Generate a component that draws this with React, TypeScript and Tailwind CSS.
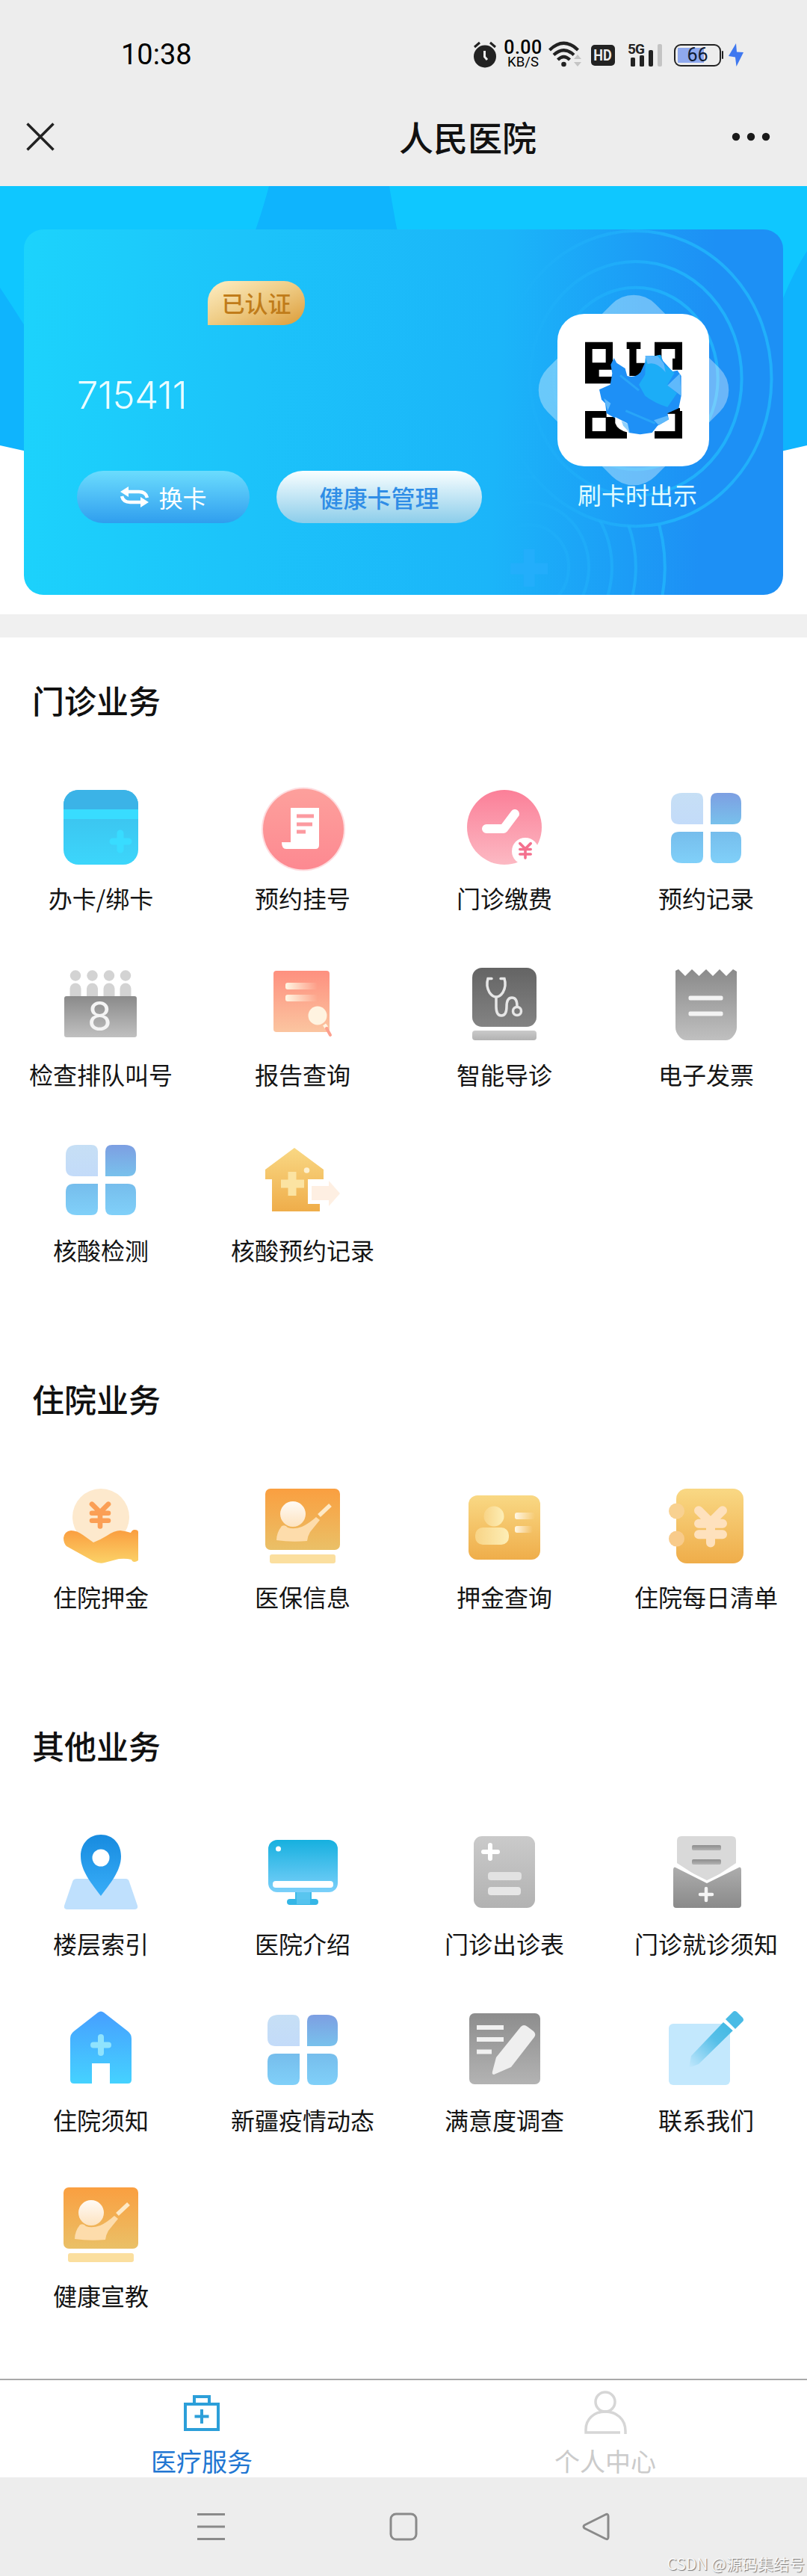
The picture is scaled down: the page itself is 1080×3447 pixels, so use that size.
import { FC, ReactNode } from "react";

type Item = { label: string; icon: ReactNode };

const Gradient: FC<{ id: string; from: string; to: string; flat?: boolean; fade?: boolean }> = ({
  id,
  from,
  to,
  flat,
  fade,
}) => (
  <linearGradient id={id} x1="0" y1="0" x2={flat ? "1" : "0"} y2={flat ? "0" : "1"}>
    <stop offset="0" stopColor={from} />
    <stop offset="1" stopColor={to} stopOpacity={fade ? 0 : 1} />
  </linearGradient>
);

// gradients shared by all the service icons
const IconDefs: FC = () => (
  <svg className="absolute h-0 w-0">
    <defs>
      <Gradient id="card" from="#3cbcea" to="#3cd6fb" />
      <Gradient id="coral" from="#fda09c" to="#fd8991" />
      <Gradient id="rose" from="#fb7f98" to="#fcb9c3" />
      <Gradient id="tile" from="#76bdec" to="#80d0f9" />
      <Gradient id="tileDark" from="#7d9fe2" to="#78c1ec" />
      <Gradient id="tileLight" from="#c6dff5" to="#c3dbf9" />
      <Gradient id="gray" from="#8a8a8a" to="#c0c0c0" />
      <Gradient id="grayDark" from="#646464" to="#838383" />
      <Gradient id="grayLight" from="#cacaca" to="#b2b2b2" />
      <Gradient id="grayMid" from="#8d8d8d" to="#b3b3b3" />
      <Gradient id="envelope" from="#adadad" to="#8a8a8a" />
      <Gradient id="salmon" from="#fe907f" to="#fbc5a0" />
      <Gradient id="cream" from="#fff7e4" to="#fff0dc" flat fade />
      <Gradient id="gold" from="#f9d884" to="#efad4a" />
      <Gradient id="orange" from="#fa9f40" to="#eac067" />
      <Gradient id="hand" from="#fa9d3f" to="#fbd267" />
      <Gradient id="skin" from="#fffaf5" to="#fde3c0" />
      <Gradient id="person" from="#f8d486" to="#fdeeb6" flat />
      <Gradient id="pin" from="#178bdf" to="#38adf8" />
      <Gradient id="screen" from="#16b0df" to="#7bd0fa" />
      <Gradient id="house" from="#469fff" to="#45d2ff" />
      <linearGradient id="pencil" x1="1" y1="0" x2="0" y2="1">
        <stop offset="0" stopColor="#3fb8e2" />
        <stop offset="0.4" stopColor="#57bfe8" />
        <stop offset="1" stopColor="#c3e8fd" />
      </linearGradient>
    </defs>
  </svg>
);

const Icon: FC<{ children: ReactNode }> = ({ children }) => (
  <svg className="h-[100px] w-[100px] overflow-visible" viewBox="0 0 100 100" fill="none">
    {children}
  </svg>
);

const Yen: FC<{ x: number; y: number; size: number; color: string; weight: number }> = ({
  x,
  y,
  size,
  color,
  weight,
}) => (
  <g
    transform={`translate(${x} ${y}) scale(${size})`}
    stroke={color}
    strokeWidth={weight}
    strokeLinecap="round"
    strokeLinejoin="round"
  >
    <path d="M-10 -13L0 -3L10 -13M-10 -2H10M-10 7H10M0 -3V14" />
  </g>
);

const CardIcon = (
  <Icon>
    <rect width="100" height="100" rx="20" fill="url(#card)" />
    <path d="M0 26V20A20 20 0 0 1 20 0H80A20 20 0 0 1 100 20V26Z" fill="#3bb3e7" />
    <path d="M0 26H100V39H0Z" fill="#38dcff" />
    <path d="M76 58V80M66 69H87" stroke="#38dcff" strokeWidth="9" strokeLinecap="round" />
  </Icon>
);

const RegisterIcon = (
  <Icon>
    <circle cx="51" cy="52.500" r="56" fill="#fdc4ca" opacity=".6" />
    <circle cx="51" cy="52.500" r="54" fill="url(#coral)" />
    <path d="M34 24H72V74Q72 79 67 79H28Q22 79 22 70H34Z" fill="#fff" />
    <path d="M42 35H65M42 46H63M42 56H54" stroke="#fc9aa0" strokeWidth="5" />
  </Icon>
);

const PayIcon = (
  <Icon>
    <circle cx="50" cy="50" r="50" fill="url(#rose)" />
    <path d="M26 52H49L64 32" stroke="#fff" strokeWidth="12" strokeLinecap="round" strokeLinejoin="round" />
    <circle cx="78" cy="82" r="18" fill="#fff" />
    <Yen x={78} y={81} size={0.72} color="#f4708e" weight={5} />
  </Icon>
);

const GridIcon = (
  <Icon>
    <path d="M18 4H37Q46 4 46 13V46H14Q3 46 3 35V18Q3 4 18 4Z" fill="url(#tileLight)" />
    <path d="M65 4H82Q97 4 97 18V35Q97 46 86 46H56V13Q56 4 65 4Z" fill="url(#tileDark)" />
    <path d="M14 56H46V89Q46 98 37 98H18Q3 98 3 84V67Q3 56 14 56Z" fill="url(#tile)" />
    <path d="M56 56H86Q97 56 97 67V84Q97 98 82 98H65Q56 98 56 89Z" fill="url(#tile)" />
  </Icon>
);

const QueueIcon = (
  <Icon>
    {[16, 38.5, 61, 83].map((x) => (
      <g key={x} fill="#d3d3d3">
        <circle cx={x} cy="12.5" r="7.2" />
        <path d={`M${x - 7.5} 40V30a7.5 7.5 0 0 1 15 0V40Z`} />
      </g>
    ))}
    <rect x="1" y="40" width="97" height="55" rx="3" fill="url(#gray)" />
    <text x="48.500" y="86" fontSize="53" textAnchor="middle" fill="#f4f4f4" className="font-[Inter,sans-serif]">
      8
    </text>
  </Icon>
);

const ReportIcon = (
  <Icon>
    <rect x="11" y="6" width="75" height="82" rx="4" fill="url(#salmon)" />
    <rect x="27" y="22" width="43" height="9" rx="3" fill="url(#cream)" />
    <rect x="27" y="38" width="43" height="9" rx="3" fill="url(#cream)" />
    <circle cx="70" cy="66" r="12.500" fill="#fff3e0" />
    <path d="M79 78L82 82" stroke="#fff3e0" strokeWidth="5" />
    <path d="M82 83L87 92" stroke="#fda08e" strokeWidth="4" strokeLinecap="round" />
  </Icon>
);

const GuideIcon = (
  <Icon>
    <rect x="7" y="2" width="86" height="79" rx="13" fill="url(#grayDark)" />
    <rect x="7" y="86" width="86" height="13" rx="4" fill="url(#grayLight)" />
    <g stroke="#e6e6e6" strokeWidth="3.500" strokeLinecap="round">
      <path d="M33 16.500H28Q25 26 30 35Q34 41 39 41Q44 41 48 35Q53 26 50 16.500H45" />
      <path d="M39 42V54Q39 66 46 66Q53 66 53 54Q53 42 60 42Q67 42 67 53" />
      <circle cx="67" cy="60" r="5.500" />
    </g>
  </Icon>
);

const InvoiceIcon = (
  <Icon>
    <path
      d="M9 6L13 4L22 13L31 4L40.500 13L50 4L59 13L68 4L77 13L86 4L91 7V82Q91 88 86 94Q82 99 76 99H24Q18 99 14 94Q9 88 9 82Z"
      fill="url(#gray)"
    />
    <rect x="26.500" y="39.500" width="46" height="6" rx="2" fill="#f3f3f3" />
    <rect x="26.500" y="60.500" width="46" height="6" rx="2" fill="#f3f3f3" />
  </Icon>
);

const HomeRecordIcon = (
  <Icon>
    <path d="M39 8L78 37V50H57V83H73V93H9V50H0V37Z" fill="url(#gold)" />
    <path d="M36 40V72M21 56H52" stroke="#fbe3a2" strokeWidth="11" />
    <circle cx="55.500" cy="38" r="3.800" fill="#fdf0cf" />
    <path d="M57 50H84V83H57Z" fill="#fff" />
    <path d="M62 59H85V52L100 69L85 86V78H62Z" fill="#feefe2" />
  </Icon>
);

const DepositIcon = (
  <Icon>
    <circle cx="50" cy="38" r="38" fill="#fde9cd" />
    <Yen x={49} y={35} size={1.1} color="#fb9f55" weight={6} />
    <path
      d="M10 56Q18 56 26 62L40 72Q50 68 58 63Q68 56 76 56Q84 57 90 59Q92 55 95 55Q100 55 100 58V96Q97 98 95 98Q92 98 91 95Q84 93 74 94L55 99Q48 101 40 97L4 77Q0 73 0 66Q1 57 10 56Z"
      fill="url(#hand)"
    />
  </Icon>
);

const TeachIcon = (
  <Icon>
    <rect width="100" height="82" rx="7" fill="url(#orange)" />
    <rect x="6" y="88" width="88" height="12" rx="3" fill="#fbdf9f" />
    <circle cx="37" cy="34" r="17" fill="url(#skin)" />
    <path d="M22 50Q27 48 30 52Q38 55 49 51Q58 47 68 38L73 42L60 58Q57 63 56 70Q35 72 15 69Q15 59 22 50Z" fill="#fddcab" />
    <path d="M72 36L87 22" stroke="#fee9c6" strokeWidth="5.500" />
  </Icon>
);

const DepositQueryIcon = (
  <Icon>
    <rect x="2" y="9" width="96" height="86" rx="12" fill="url(#gold)" />
    <circle cx="36" cy="37" r="13.500" fill="url(#person)" />
    <rect x="11" y="52" width="45" height="23" rx="10" fill="url(#person)" />
    <rect x="64" y="32" width="27" height="9" rx="3" fill="url(#cream)" />
    <rect x="64" y="50" width="24" height="9" rx="3" fill="url(#cream)" />
  </Icon>
);

const BillIcon = (
  <Icon>
    <rect x="10" width="90" height="100" rx="14" fill="url(#gold)" />
    <circle cx="10.500" cy="30" r="10.500" fill="#f8d191" />
    <circle cx="10.500" cy="67" r="10.500" fill="#f8cb8b" />
    <Yen x={56} y={50} size={1.6} color="#fee1bd" weight={7.5} />
  </Icon>
);

const FloorIcon = (
  <Icon>
    <path d="M18 58H83Q87 58 88 62L99 94Q100 99 95 99H5Q0 99 1 94L12 62Q13 58 18 58Z" fill="#bfe0fd" />
    <path d="M50 -1C66 -1 77 11 77 28C77 48 61 66 50 81C39 66 23 48 23 28C23 11 34 -1 50 -1Z" fill="url(#pin)" />
    <circle cx="50" cy="30" r="11.500" fill="#fff" />
  </Icon>
);

const ScreenIcon = (
  <Icon>
    <rect x="40" y="74" width="22" height="17" fill="#3dbbe9" />
    <rect x="29" y="85" width="42" height="8" rx="4" fill="#35b6e6" />
    <path d="M42 76H60V92H42Z" fill="#6ccbf4" opacity=".6" />
    <rect x="4" y="6" width="93" height="70" rx="12" fill="url(#screen)" />
    <rect x="10" y="61" width="81" height="9" rx="4" fill="#fff" />
    <circle cx="17.500" cy="18" r="3.500" fill="#fff" />
  </Icon>
);

const ScheduleIcon = (
  <Icon>
    <rect x="9" y="1" width="82" height="96" rx="11" fill="url(#grayLight)" />
    <path d="M31 13V31M22 22H41" stroke="#fff" strokeWidth="6" strokeLinecap="round" />
    <rect x="28" y="49" width="45" height="11" rx="4" fill="#e2e2e2" />
    <rect x="28" y="69" width="44" height="11" rx="4" fill="#e6e6e6" />
  </Icon>
);

const NoticeIcon = (
  <Icon>
    <path d="M17 1H84Q90 1 90 7V37L51 63L11 37V7Q11 1 17 1Z" fill="#d9d9d9" />
    <rect x="31" y="13" width="39" height="7" rx="2" fill="url(#grayMid)" />
    <rect x="31" y="32" width="39" height="7" rx="2" fill="url(#grayMid)" />
    <path d="M10 42L51 63L93 42Q97 42 97 46V93Q97 97 93 97H10Q6 97 6 93V46Q6 42 10 42Z" fill="url(#envelope)" />
    <path d="M7 40L51 62L96 40" stroke="#fff" strokeWidth="3.500" />
    <path d="M50 71V87M42 79H58" stroke="#f4f4f4" strokeWidth="4.500" strokeLinecap="round" />
  </Icon>
);

const HouseIcon = (
  <Icon>
    <path
      d="M46 1Q50 -2 54 1L86 26Q91 30 91 36V91Q91 96 86 96H62V69H38V96H14Q9 96 9 91V36Q9 30 14 26Z"
      fill="url(#house)"
    />
    <path d="M50 34V55M40 44.500H60" stroke="#8fe3fd" strokeWidth="8" strokeLinecap="round" />
  </Icon>
);

const SurveyIcon = (
  <Icon>
    <rect x="3" y="2" width="95" height="95" rx="7" fill="url(#grayMid)" />
    <path d="M13 21H49M13 37H49M13 53.500H33" stroke="#f1f1f1" strokeWidth="6" />
    <path d="M72 20Q76 16 81 20L89 26Q93 30 90 34L59 74L36 84Q33 84 34 80L39 61Z" fill="#efefef" />
  </Icon>
);

const ContactIcon = (
  <Icon>
    <rect y="16" width="82" height="82" rx="6" fill="#c3e8fd" />
    <path d="M73 14L86 25L40 70L27 75L30 59Z" fill="url(#pencil)" />
    <path d="M76 10L86 0Q88 -2 91 0L99 8Q101 11 99 13L89 23Z" fill="#4abbe5" />
    <path d="M73.500 12L88 25.500" stroke="#fff" strokeWidth="2.500" />
  </Icon>
);

const sections: { title: string; items: Item[] }[] = [
  {
    title: "门诊业务",
    items: [
      { label: "办卡/绑卡", icon: CardIcon },
      { label: "预约挂号", icon: RegisterIcon },
      { label: "门诊缴费", icon: PayIcon },
      { label: "预约记录", icon: GridIcon },
      { label: "检查排队叫号", icon: QueueIcon },
      { label: "报告查询", icon: ReportIcon },
      { label: "智能导诊", icon: GuideIcon },
      { label: "电子发票", icon: InvoiceIcon },
      { label: "核酸检测", icon: GridIcon },
      { label: "核酸预约记录", icon: HomeRecordIcon },
    ],
  },
  {
    title: "住院业务",
    items: [
      { label: "住院押金", icon: DepositIcon },
      { label: "医保信息", icon: TeachIcon },
      { label: "押金查询", icon: DepositQueryIcon },
      { label: "住院每日清单", icon: BillIcon },
    ],
  },
  {
    title: "其他业务",
    items: [
      { label: "楼层索引", icon: FloorIcon },
      { label: "医院介绍", icon: ScreenIcon },
      { label: "门诊出诊表", icon: ScheduleIcon },
      { label: "门诊就诊须知", icon: NoticeIcon },
      { label: "住院须知", icon: HouseIcon },
      { label: "新疆疫情动态", icon: GridIcon },
      { label: "满意度调查", icon: SurveyIcon },
      { label: "联系我们", icon: ContactIcon },
      { label: "健康宣教", icon: TeachIcon },
    ],
  },
];

const StatusBar: FC = () => (
  <div className="flex h-[122px] items-center pt-[24px] pl-[162px] font-[Roboto,sans-serif] text-black">
    <span className="w-[471px] text-[38px] leading-none">10:38</span>
    <svg className="h-[36px] w-[32px]" viewBox="0 0 32 36" fill="none">
      <circle cx="16" cy="20.500" r="15" fill="#222" />
      <path d="M2 8L9 2M30 8L23 2" stroke="#222" strokeWidth="3" />
      <path d="M15.500 13V21L19 25" stroke="#ededed" strokeWidth="3" />
    </svg>
    <div className="ml-[9px] flex w-[52px] flex-col items-center whitespace-nowrap">
      <span className="text-[25px] font-medium leading-[20px] tracking-[0.5px]">0.00</span>
      <span className="text-[18.5px] leading-[18px]">KB/S</span>
    </div>
    <svg className="ml-[8px] h-[36px] w-[46px]" viewBox="0 0 46 36" fill="none">
      <g stroke="#222" strokeWidth="4.200">
        <path d="M1.500 12Q20.500 -6.500 39.500 12" />
        <path d="M7 18.500Q20.500 6 34 18.500" />
        <path d="M12.500 25Q20.500 17 28.500 25" />
      </g>
      <circle cx="20.500" cy="31" r="3.300" fill="#222" />
      <path d="M34 24L39 18L44 24ZM34 28L39 34L44 28Z" fill="#c4c4c4" />
    </svg>
    <span className="ml-[11px] mt-[2px] flex h-[28px] w-[32px] items-center justify-center rounded-[5px] bg-[#222] text-[20px] font-bold leading-none text-[#ededed]">
      <span className="scale-x-90">HD</span>
    </span>
    <div className="ml-[17px] flex h-[34px] w-[46px] items-end justify-between pb-[1px] pl-[4px]">
      <span className="relative h-[12px] w-[6px] rounded-[1.5px] bg-[#222]">
        <span className="absolute -top-[21px] -left-[4px] text-[19px] font-bold leading-[20px] tracking-[-1px] text-[#222]">
          5G
        </span>
      </span>
      <span className="h-[15px] w-[6px] rounded-[1.5px] bg-[#222]" />
      <span className="h-[22px] w-[6px] rounded-[2px] bg-[#222]" />
      <span className="h-[30px] w-[6px] rounded-[2px] bg-[#c4c4c4]" />
    </div>
    <div className="ml-[16px] mt-[1px] flex h-[30px] w-[63px] items-center justify-center rounded-[9px] border-2 border-[#222] bg-[linear-gradient(90deg,#8fa9ee_0,#8fa9ee_100%)] bg-[length:35px_20px] bg-[position:3px_3px] bg-no-repeat">
      <span className="text-[25px] leading-none text-[#101c33]">66</span>
    </div>
    <span className="ml-[1px] h-[11px] w-[2px] rounded-full bg-[#222]" />
    <svg className="ml-[7px] h-[31px] w-[21px]" viewBox="0 0 21 31">
      <path d="M10 0L0 17L9 18.500L10.500 31L20 12L11 11.500Z" fill="#3f78f0" />
    </svg>
  </div>
);

const TitleBar: FC = () => (
  <div className="flex h-[127px] items-center justify-between pr-[49px] pb-[5px] pl-[35px]">
    <svg className="h-[38px] w-[38px]" viewBox="0 0 38 38">
      <path d="M1.500 1.500L36.500 36.500M36.500 1.500L1.500 36.500" stroke="#222" strokeWidth="3.500" />
    </svg>
    <h1 className="mb-[2px] ml-[200px] text-[46px] font-medium leading-none text-[#111]">人民医院</h1>
    <svg className="h-[12px] w-[52px]" viewBox="0 0 52 12" fill="#1a1a1a">
      <circle cx="6" cy="6" r="5.200" />
      <circle cx="26" cy="6" r="5.200" />
      <circle cx="46" cy="6" r="5.200" />
    </svg>
  </div>
);

const CardRings: FC = () => (
  <svg className="absolute inset-0 h-full w-full" viewBox="32 307 1015 490" fill="none">
    <defs>
      <linearGradient id="ring" gradientUnits="userSpaceOnUse" x1="680" y1="0" x2="900" y2="0">
        <stop offset="0" stopColor="#22b6fb" stopOpacity="0" />
        <stop offset="1" stopColor="#20b0fb" />
      </linearGradient>
      <clipPath id="below">
        <path
          clipRule="evenodd"
          d="M32 307H1047V797H32ZM851 309A182 198 0 1 0 851 705A182 198 0 1 0 851 309Z"
        />
      </clipPath>
    </defs>
    <g stroke="url(#ring)" strokeWidth="4">
      <ellipse cx="851" cy="507" rx="182" ry="198" />
      <ellipse cx="851" cy="507" rx="142" ry="157" />
      <ellipse cx="851" cy="507" rx="110" ry="122" />
      <g clipPath="url(#below)">
        <ellipse cx="708" cy="760" rx="53" ry="57" />
        <ellipse cx="708" cy="760" rx="80" ry="87" />
        <ellipse cx="708" cy="760" rx="111" ry="121" />
        <ellipse cx="708" cy="760" rx="143" ry="156" />
        <ellipse cx="708" cy="760" rx="182" ry="198" />
      </g>
    </g>
    <path d="M708 736V786M683 762H733" stroke="#26aefc" strokeWidth="15" opacity=".7" />
  </svg>
);

const QrCode: FC = () => (
  <svg className="relative h-[204px] w-[203px] rounded-[36px] bg-white" viewBox="198 121 609 612">
    <path
      fillRule="evenodd"
      d="M309 234H420V401H309ZM338 262V317H392V262ZM365 345V373H425V345Z M476 234H532V262H515V318H560V370H487V262H476Z M588 234H699V345H660V300H670V262H616V317H588Z M309 511H395V535H477V621H309ZM338 538V592H392V538Z M588 621V592H670V522H637V500L660 490L690 500V511H699V621Z"
    />
    <path
      d="M425 298L436 318L470 340L478 370Q510 380 532 355L550 315L552 290H590L612 285L622 310L660 352L680 348L695 370V450L685 500L640 520L645 545L600 570L578 598L530 605L485 598L470 560L430 540L395 520L390 480L375 465L366 425L410 405L418 360L412 325Z"
      fill="#1e90f6"
    />
    <path d="M552 292L590 290L612 285L622 320L668 358L640 405L678 440L640 495Q590 480 550 450L525 405L550 365Z" fill="#1cadf7" />
    <path d="M550 290H600L625 320L632 355Q595 310 560 322ZM690 360L695 450L640 408ZM385 460L412 480L400 510ZM585 548L640 530L645 545L605 568Z" fill="#5fb9fb" />
    <path d="M430 535L478 560L484 598Q440 590 430 560Z" fill="#fff" />
    <path d="M455 550L480 562L488 598L462 570Z" fill="#8fd0fc" />
    <path d="M450 368L525 428M472 510L590 560" stroke="#28a5f8" strokeWidth="9" />
  </svg>
);

const HealthCard: FC = () => (
  <div className="relative flex h-[489px] overflow-hidden rounded-[26px] bg-[linear-gradient(93deg,#1cd3fc_0%,#1cc4fa_28%,#1bb5f9_62%,#1c9cf6_80%,#1d90f5_89%)]">
    <CardRings />
    <div className="relative flex w-[640px] flex-col pl-[71px]">
      <span className="mt-[69px] ml-[175px] flex h-[59px] w-[130px] items-center justify-center rounded-[28px] rounded-bl-none bg-linear-to-br from-[#fdeec4] via-[#eecb83] to-[#dc9c33] text-[31px] font-medium text-[#c07c1a]">
        已认证
      </span>
      <span className="mt-[57px] font-[Inter,sans-serif] text-[51px] font-light leading-[74px] tracking-[-0.5px] text-[#eafcff]">
        715411
      </span>
      <div className="mt-[64px] flex gap-[36px]">
        <button className="flex h-[70px] w-[231px] items-center justify-center gap-[12px] rounded-full bg-linear-to-b from-[#6bdcfd] to-[#2f9eee] text-[32px] text-white">
          <svg className="h-[28px] w-[40px]" viewBox="0 0 40 28" fill="none" stroke="#fff" strokeWidth="4.500">
            <path d="M10 7H26Q35 7 37 15" />
            <path d="M30 21H14Q5 21 3 13" />
            <path d="M12 0L1 7L12 14ZM28 14L39 21L28 28Z" fill="#fff" stroke="none" />
          </svg>
          换卡
        </button>
        <button className="flex h-[70px] w-[275px] items-center justify-center rounded-full bg-linear-to-b from-[#f8feff] to-[#8bcdea] text-[32px] font-medium text-[#2f8de6]">
          健康卡管理
        </button>
      </div>
    </div>
    <div className="relative flex flex-1 flex-col items-center pt-[113px] pr-[26px]">
      <div className="relative">
        <span className="absolute top-0 left-0 h-[204px] w-[204px] rotate-45 rounded-[41px] bg-white/35" />
        <QrCode />
      </div>
      <span className="ml-[12px] mt-[13px] text-[32px] leading-[48px] text-[#e2fcff]">刷卡时出示</span>
    </div>
  </div>
);

const Section: FC<{ title: string; items: Item[] }> = ({ title, items }) => (
  <section className="mb-[143px]">
    <h2 className="pl-[43px] text-[43px] font-medium leading-[60px] text-[#111]">{title}</h2>
    <div className="mt-[91px] grid grid-cols-4 gap-y-[65.5px]">
      {items.map((item) => (
        <div key={item.label} className="flex h-[170px] flex-col items-center">
          {item.icon}
          <span className="mt-[20px] text-[32px] leading-[48px] whitespace-nowrap text-[#141414]">{item.label}</span>
        </div>
      ))}
    </div>
  </section>
);

const App: FC = () => {
  return (
    <div className="flex h-[3447px] w-[1080px] flex-col overflow-hidden bg-white font-['Noto_Sans_CJK_SC',sans-serif]">
      <IconDefs />
      <header className="bg-[#ededed]">
        <StatusBar />
        <TitleBar />
      </header>

      <div className="relative h-[574px] px-[32px] pt-[58px]">
        <svg className="absolute top-0 left-0 h-[400px] w-full" viewBox="0 249 1080 400">
          <path d="M0 249H1080V596Q810 660 540 660Q270 660 0 596Z" fill="#0fb4fd" />
          <path d="M0 249H360Q320 400 240 480H60Q30 430 0 385ZM521 249H1080V336Q1058 370 1040 420H560Q535 340 521 249Z" fill="#0fc7ff" />
        </svg>
        <HealthCard />
      </div>
      <div className="h-[31px] bg-[#f0f0f0]" />

      <main className="h-[2330px] pt-[53px]">
        {sections.map((section) => (
          <Section key={section.title} {...section} />
        ))}
      </main>

      <nav className="grid h-[132px] grid-cols-2 border-t-2 border-[#a9a9a9] text-[34px] leading-[48px]">
        <div className="flex flex-col items-center text-[#2176d2]">
          <svg className="mt-[19px] h-[50px] w-[48px]" viewBox="0 0 48 50" fill="none" stroke="#2c9fd9" strokeWidth="4">
            <path d="M2 13H46V47H2ZM14 13V3H34V13M24 20V39M14.500 29.500H33.500" />
          </svg>
          <span className="mt-[15px]">医疗服务</span>
        </div>
        <div className="flex flex-col items-center text-[#cbcbcb]">
          <svg className="mt-[14px] h-[60px] w-[58px]" viewBox="0 0 58 60" fill="none" stroke="#d6d6d6" strokeWidth="3.500">
            <circle cx="29" cy="15" r="13" />
            <path d="M49 56H3V52C3 38 14 28 29 28C44 28 56 38 56 54V58" />
          </svg>
          <span className="mt-[10px]">个人中心</span>
        </div>
      </nav>

      <footer className="relative flex h-[132px] items-start justify-between bg-[#ededed] px-[264px] pt-[47px]">
        <svg className="h-[38px] w-[37px]" viewBox="0 0 37 38" stroke="#8a8a8a" strokeWidth="3">
          <path d="M0 2.500H37M0 19H37M0 35.500H37" />
        </svg>
        <svg className="h-[38px] w-[38px]" viewBox="0 0 38 38" fill="none" stroke="#8a8a8a" strokeWidth="3">
          <rect x="2" y="2" width="34" height="34" rx="7" />
        </svg>
        <svg className="h-[38px] w-[37px]" viewBox="0 0 37 38" fill="none" stroke="#8a8a8a" strokeWidth="3" strokeLinejoin="round">
          <path d="M31 3Q35 1 35 5V33Q35 37 31 35L3 21Q1 19 3 17Z" />
        </svg>
        <span className="absolute right-[3px] bottom-[2px] text-[21px] leading-[30px] whitespace-nowrap text-[#f8f8f8] [text-shadow:1px_1px_1px_#777]">
          CSDN @源码集结号
        </span>
      </footer>
    </div>
  );
};

export default App;
